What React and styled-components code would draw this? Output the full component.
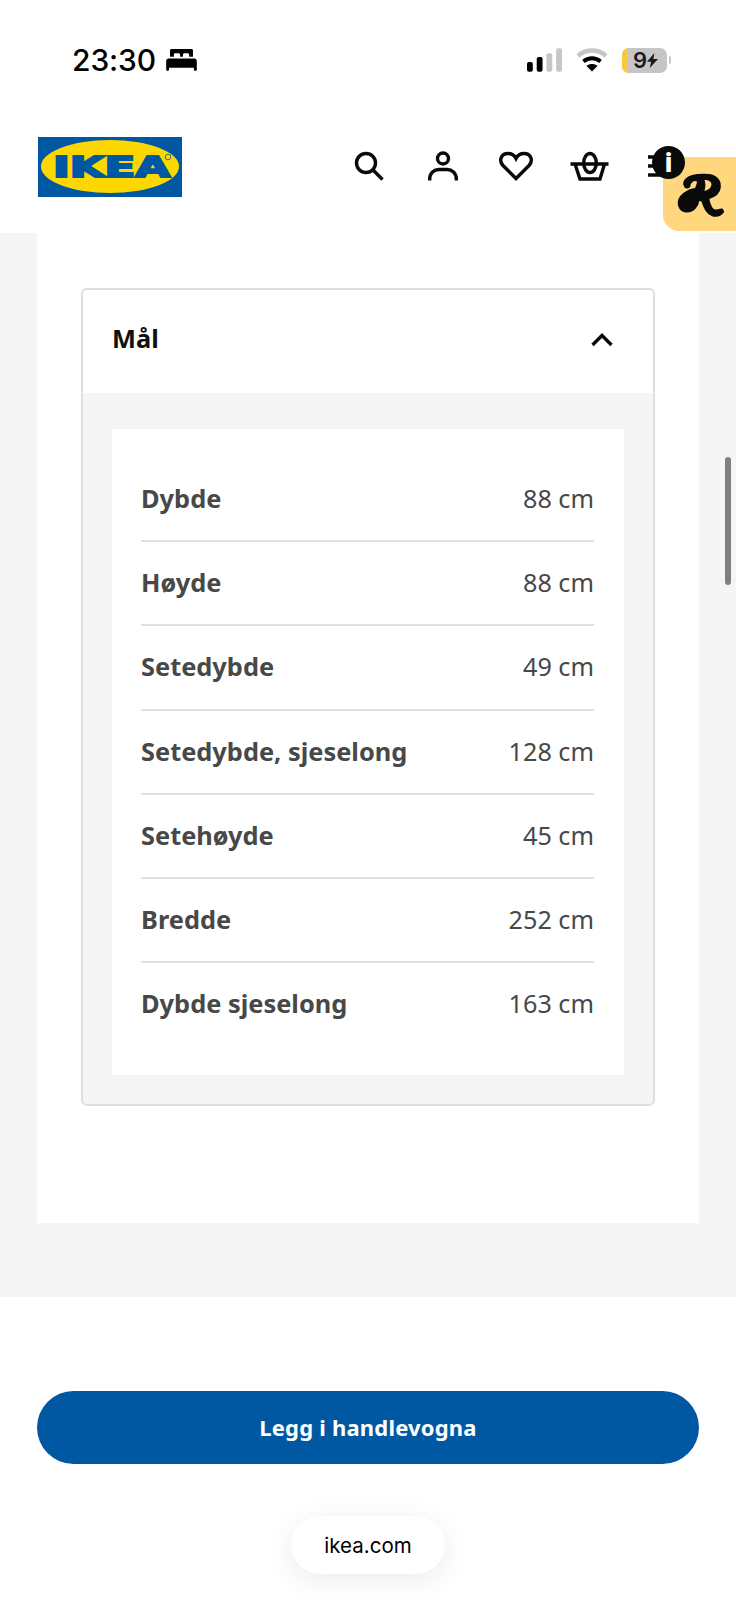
import React from "react";
import styled, { createGlobalStyle } from "styled-components";

const Global = createGlobalStyle`
  html, body { margin: 0; padding: 0; background: #fff; }
  body { width: 736px; height: 1600px; overflow: hidden; font-family: "Noto Sans", sans-serif; }
`;

const Page = styled.div`
  position: relative;
  width: 736px;
  height: 1600px;
  overflow: hidden;
  background: #fff;
  display: flex;
  flex-direction: column;
`;

const StatusBar = styled.div`
  height: 120px;
  flex: none;
  box-sizing: border-box;
  padding: 41px 65px 0 72px;
  display: flex;
  justify-content: space-between;
  align-items: flex-start;
`;
const TimeGroup = styled.div`
  display: flex;
  align-items: center;
  gap: 10px;
`;
const Time = styled.span`
  font-family: Inter, "Liberation Sans", sans-serif;
  font-size: 30px;
  line-height: 38px;
  font-weight: 500;
  color: #000;
  letter-spacing: -0.1px;
`;
const StatusIcons = styled.div`
  display: flex;
  align-items: center;
  gap: 14px;
  height: 38px;
`;
const Battery = styled.div`
  position: relative;
  width: 45px;
  height: 25px;
  border-radius: 7px;
  overflow: hidden;
  background: #c6c6c8;
  display: flex;
  align-items: center;
  justify-content: center;
  padding-left: 2px;
  box-sizing: border-box;
  font-family: Inter, "Liberation Sans", sans-serif;
  font-size: 22px;
  font-weight: 600;
  color: #1a1a1a;
`;
const BatteryFill = styled.span`
  position: absolute;
  left: 0;
  top: 0;
  bottom: 0;
  width: 6px;
  background: #f8c93a;
`;
const BatteryWrap = styled.div`
  display: flex;
  align-items: center;
  gap: 2px;
`;
const BatteryCap = styled.span`
  width: 2px;
  height: 8px;
  border-radius: 0 2px 2px 0;
  background: #c6c6c8;
`;

const Header = styled.header`
  height: 113px;
  flex: none;
  box-sizing: border-box;
  padding: 17px 0 0 38px;
  display: flex;
  align-items: flex-start;
`;
const Nav = styled.nav`
  margin-left: 167px;
  display: flex;
  gap: 33.5px;
  padding-top: 9px;
`;
const NavIcon = styled.svg`
  width: 40px;
  height: 40px;
  display: block;
  flex: none;
`;

const Badge = styled.div`
  position: absolute;
  left: 663px;
  top: 157px;
  width: 73px;
  height: 74px;
  background: #fed77f;
  border-radius: 16px 0 0 16px;
`;
const InfoDot = styled.div`
  position: absolute;
  left: 652px;
  top: 146px;
  width: 33px;
  height: 33px;
  border-radius: 50%;
  background: #0a0a0a;
  color: #fff;
  font-family: "Noto Sans", sans-serif;
  font-weight: 800;
  font-size: 26px;
  line-height: 33px;
  text-align: center;
`;
const BadgeLogo = styled.svg`
  position: absolute;
  left: 670px;
  top: 170px;
  width: 60px;
  height: 52px;
`;

const Gray = styled.main`
  flex: none;
  height: 1064px;
  box-sizing: border-box;
  background: #f5f5f5;
  padding: 0 37px 74px 37px;
`;
const Card = styled.section`
  height: 100%;
  box-sizing: border-box;
  background: #fff;
  padding: 55px 44px 0 44px;
`;
const Accordion = styled.div`
  height: 818px;
  box-sizing: border-box;
  border: 2px solid #dfdfdf;
  border-radius: 6px;
  overflow: hidden;
  background: #f5f5f5;
`;
const AccordionHead = styled.div`
  height: 103px;
  box-sizing: border-box;
  background: #fff;
  display: flex;
  align-items: center;
  justify-content: space-between;
  padding: 0 39.5px 7px 29px;
`;
const AccordionTitle = styled.h3`
  margin: 0;
  font-size: 25.4px;
  line-height: 40px;
  font-weight: 700;
  color: #111;
`;
const Chevron = styled.svg`
  width: 24px;
  height: 24px;
  display: block;
  margin-top: 4px;
`;
const Inner = styled.div`
  margin: 36px 29px 0 29px;
  height: 646px;
  box-sizing: border-box;
  background: #fff;
  padding: 29px 30px 0 29px;
`;
const Row = styled.div`
  height: 84.2px;
  box-sizing: border-box;
  padding-bottom: ${(p) => (p.$last ? "4px" : "2px")};
  display: flex;
  align-items: center;
  justify-content: space-between;
  border-bottom: ${(p) => (p.$last ? "none" : "2px solid #e0e0e0")};
`;
const Label = styled.span`
  font-size: 25.4px;
  font-weight: 700;
  color: #484848;
`;
const Value = styled.span`
  font-size: 25.2px;
  font-weight: 400;
  color: #484848;
`;

const Footer = styled.div`
  flex: 1;
  padding: 94px 37px 0;
`;
const CartButton = styled.button`
  width: 662px;
  height: 73px;
  border: none;
  border-radius: 37px;
  padding: 0 0 2px;
  background: #0058a3;
  color: #fff;
  font-family: "Noto Sans", sans-serif;
  font-size: 22px;
  font-weight: 700;
  letter-spacing: 0.2px;
  display: block;
`;
const UrlPill = styled.div`
  position: absolute;
  left: 291px;
  top: 1516px;
  width: 154px;
  height: 58px;
  border-radius: 29px;
  background: #fff;
  box-shadow: 0 6px 30px rgba(0, 0, 0, 0.08);
  display: flex;
  align-items: center;
  justify-content: center;
  font-family: Inter, "Liberation Sans", sans-serif;
  font-size: 20.5px;
  color: #000;
`;
const Scrollbar = styled.div`
  position: absolute;
  left: 725px;
  top: 457px;
  width: 6px;
  height: 128px;
  border-radius: 3px;
  background: #808080;
`;

const Bed = () => (
  <svg width="31" height="22" viewBox="0 0 32 23" fill="#000">
    <path d="M4 1.500C4 .7 4.700 0 5.500 0h21c.8 0 1.500.7 1.500 1.500V8h-4V6c0-.8-.7-1.500-1.500-1.500H19c-.8 0-1.500.7-1.500 1.500v2h-3V6c0-.8-.7-1.500-1.500-1.500H9.500C8.700 4.500 8 5.200 8 6v2H4z" />
    <path d="M2.500 10h27c1.400 0 2.500 1.100 2.500 2.500V21.500c0 .8-.6 1.500-1.500 1.500S29 22.300 29 21.500v-2H3v2c0 .8-.7 1.500-1.500 1.500S0 22.300 0 21.500v-9C0 11.100 1.100 10 2.500 10z" />
  </svg>
);

const Signal = () => (
  <svg width="35" height="24" viewBox="0 0 36 24">
    <rect x="0" y="14" width="6" height="10" rx="2" fill="#000" />
    <rect x="10" y="9" width="6" height="15" rx="2" fill="#000" />
    <rect x="20" y="5" width="6" height="19" rx="2" fill="#c6c6c8" />
    <rect x="30" y="0" width="6" height="24" rx="2" fill="#c6c6c8" />
  </svg>
);

const Wifi = () => (
  <svg width="32" height="24" viewBox="0 0 32 24" fill="none">
    <path d="M2 8C9.800 .8 22.200 .8 30 8" stroke="#c6c6c8" strokeWidth="4.500" />
    <path d="M7.500 13.500C12.500 9.200 19.500 9.200 24.500 13.500" stroke="#000" strokeWidth="4" />
    <path d="M16 23.500l-5.500-5.500c3.200-2.600 7.800-2.600 11 0z" fill="#000" />
  </svg>
);

const Bolt = () => (
  <svg width="11" height="15" viewBox="0 0 12 20" preserveAspectRatio="none" fill="#1a1a1a">
    <path d="M8 0L0 11.500h4.500L3 20l9-12H7z" />
  </svg>
);

const Logo = () => (
  <svg width="144" height="60" viewBox="0 0 144 60" role="img" aria-label="IKEA">
    <rect width="144" height="60" fill="#0058a3" />
    <ellipse cx="72" cy="29.500" rx="69" ry="26.500" fill="#fdd800" />
    <text
      x="73.500"
      y="40"
      textAnchor="middle"
      fontFamily="'DejaVu Sans', sans-serif"
      fontWeight="700"
      fontSize="27.500"
      textLength="117"
      lengthAdjust="spacingAndGlyphs"
      fill="#0058a3"
      stroke="#0058a3"
      strokeWidth="2"
    >
      IKEA
    </text>
    <circle cx="130" cy="20" r="2.800" fill="none" stroke="#0058a3" strokeWidth="0.800" />
  </svg>
);

const iconStroke = { fill: "none", stroke: "#0a0a0a", strokeWidth: 3.4 };

const rows = [
  ["Dybde", "88 cm"],
  ["Høyde", "88 cm"],
  ["Setedybde", "49 cm"],
  ["Setedybde, sjeselong", "128 cm"],
  ["Setehøyde", "45 cm"],
  ["Bredde", "252 cm"],
  ["Dybde sjeselong", "163 cm"],
];

export default function App() {
  return (
    <Page>
      <Global />
      <StatusBar>
        <TimeGroup>
          <Time>23:30</Time>
          <Bed />
        </TimeGroup>
        <StatusIcons>
          <Signal />
          <Wifi />
          <BatteryWrap>
            <Battery>
              <BatteryFill />
              9<Bolt />
            </Battery>
            <BatteryCap />
          </BatteryWrap>
        </StatusIcons>
      </StatusBar>
      <Header>
        <Logo />
        <Nav>
          <NavIcon viewBox="0 0 40 40" {...iconStroke}>
            <circle cx="17" cy="17" r="9.500" />
            <path d="M24 24L33.500 33.500" />
          </NavIcon>
          <NavIcon viewBox="0 0 40 40" {...iconStroke}>
            <circle cx="20" cy="12.500" r="5.500" />
            <path d="M6.700 34.500V33c0-6 4.300-9.500 9.300-9.500h8c5 0 9.300 3.500 9.300 9.500v1.500" />
          </NavIcon>
          <NavIcon viewBox="0 0 40 40" {...iconStroke}>
            <path d="M20 32.500L7 19.500C2.500 14.500 5 7.500 12 7.500c3.500 0 6.500 2 8 5 1.500-3 4.500-5 8-5 7 0 9.500 7 5 12z" />
          </NavIcon>
          <NavIcon viewBox="0 0 40 40" {...iconStroke}>
            <path d="M.5 18h38M5 18l5 15h20l4.500-15" />
            <ellipse cx="20" cy="17" rx="6.300" ry="9.500" />
          </NavIcon>
          <NavIcon viewBox="0 0 40 40" {...iconStroke}>
            <path d="M5 11h30M5 20h30M5 29h30" />
          </NavIcon>
        </Nav>
      </Header>
      <Gray>
        <Card>
          <Accordion>
            <AccordionHead>
              <AccordionTitle>Mål</AccordionTitle>
              <Chevron viewBox="0 0 24 24" fill="none" stroke="#0a0a0a" strokeWidth="3.400">
                <path d="M2.500 17L12 7.500 21.500 17" />
              </Chevron>
            </AccordionHead>
            <Inner>
              {rows.map(([k, v], i) => (
                <Row key={k} $last={i === rows.length - 1}>
                  <Label>{k}</Label>
                  <Value>{v}</Value>
                </Row>
              ))}
            </Inner>
          </Accordion>
        </Card>
      </Gray>
      <Footer>
        <CartButton>Legg i handlevogna</CartButton>
      </Footer>
      <Badge />
      <BadgeLogo viewBox="0 0 180 156">
        <path
          fillRule="evenodd"
          fill="#0a0a0a"
          stroke="#0a0a0a"
          strokeWidth="5"
          d="M42 38C48 18 80 12 110 14C135 15 152 28 150 52C148 70 132 80 115 85C118 100 124 120 136 121C144 121 150 117 156 118L160 125C152 136 140 140 126 136C108 130 102 108 96 92L86 90C84 108 70 126 50 125C32 124 22 108 27 90C32 74 52 60 77 56C81 46 86 36 82 32C72 27 60 34 58 50C56 54 48 54 45 50C43 46 41 42 42 38ZM100 28C106 38 104 52 100 66C112 64 126 58 127 44C128 32 114 26 100 28Z"
        />
      </BadgeLogo>
      <InfoDot>i</InfoDot>
      <Scrollbar />
      <UrlPill>ikea.com</UrlPill>
    </Page>
  );
}
